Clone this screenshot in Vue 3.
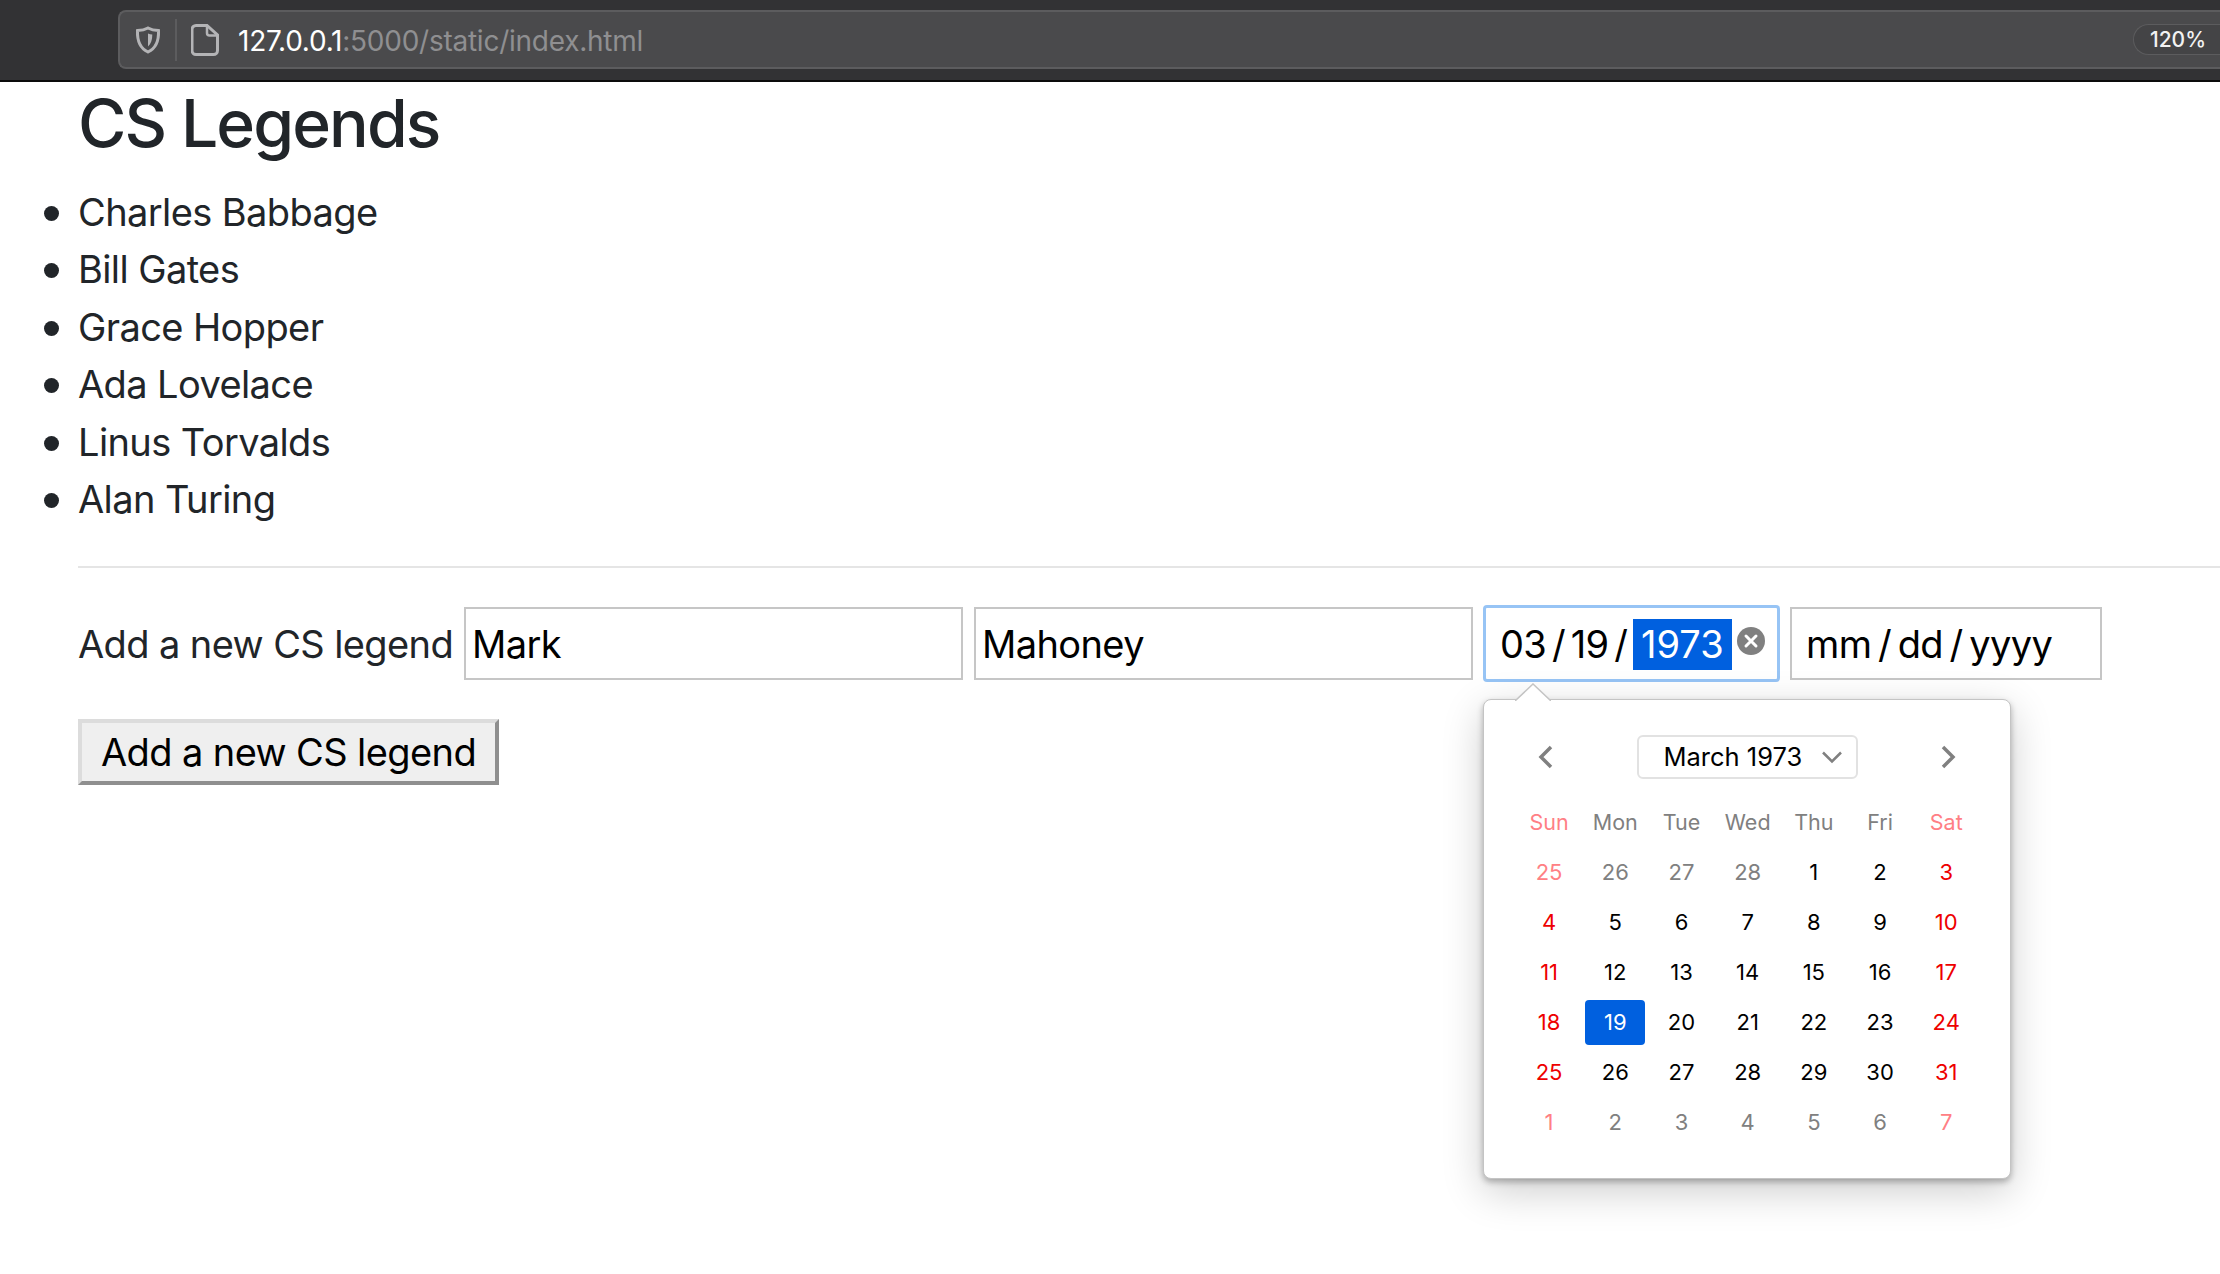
<template>
  <div class="page">
    <header class="toolbar">
      <div class="urlbar">
        <svg class="shield" width="26" height="28" viewBox="0 0 26 28" fill="none">
          <path d="M13 2c3 1.600 6.400 2.400 10.500 2.600.4 9.500-2.400 17.600-10.500 21.400C4.900 22.200 2.100 14.100 2.500 4.600 6.600 4.400 10 3.600 13 2z" stroke="#b4b4b6" stroke-width="3" />
          <path d="M13 7.500c1.400.6 2.800 1 4.300 1.100 0 5-1.300 9.500-4.300 12z" fill="#b4b4b6" />
        </svg>
        <span class="divider"></span>
        <svg class="file" width="28" height="32" viewBox="0 0 28 32" fill="none">
          <path d="M5 1.500h11L26.500 11v15.500a4 4 0 0 1-4 4H5a4 4 0 0 1-4-4v-21a4 4 0 0 1 4-4z" stroke="#b4b4b6" stroke-width="3" />
          <path d="M16 2v7a2.500 2.500 0 0 0 2.500 2.500H26" stroke="#b4b4b6" stroke-width="2.500" />
        </svg>
        <span class="url"><b>127.0.0.1</b>:5000/static/index.html</span>
        <span class="zoom">120%</span>
      </div>
    </header>

    <main class="content">
      <h1>CS Legends</h1>
      <ul class="legends">
        <li v-for="name in legends" :key="name">{{ name }}</li>
      </ul>
      <hr />
      <form class="add-row" @submit.prevent>
        <label>Add a new CS legend</label>
        <input class="field name" type="text" value="Mark" />
        <input class="field name" type="text" value="Mahoney" />
        <div class="date-wrap">
          <div class="field date focused">
            <span>03 / 19 / </span><span class="selected-part">1973</span>
            <svg class="clear" width="28" height="28" viewBox="0 0 28 28">
              <circle cx="14" cy="14" r="14" fill="#808080" />
              <path d="M9 9l10 10M19 9L9 19" stroke="#fff" stroke-width="3" stroke-linecap="round" />
            </svg>
          </div>
          <div class="popup">
            <svg class="caret" width="36" height="18" viewBox="0 0 36 18">
              <path d="M0 18L18 1l18 17" fill="#fff" stroke="#c4c4c4" stroke-width="1.500" />
            </svg>
            <div class="cal-head">
              <svg width="20" height="28" viewBox="0 0 20 28" fill="none">
                <path d="M15 4L5 14l10 10" stroke="#808080" stroke-width="3.500" />
              </svg>
              <div class="month-btn">
                <span>March 1973</span>
                <svg width="22" height="14" viewBox="0 0 22 14" fill="none">
                  <path d="M2 2.500l9 9 9-9" stroke="#808080" stroke-width="2.500" />
                </svg>
              </div>
              <svg width="20" height="28" viewBox="0 0 20 28" fill="none">
                <path d="M5 4l10 10L5 24" stroke="#808080" stroke-width="3.500" />
              </svg>
            </div>
            <div class="cal-grid">
              <span v-for="(d, i) in weekdays" :key="d" class="wd" :class="{ weekend: i === 0 || i === 6 }">{{ d }}</span>
              <span
                v-for="(c, i) in cells"
                :key="i"
                class="day"
                :class="{ other: c.other, weekend: i % 7 === 0 || i % 7 === 6, sel: c.sel }"
              >{{ c.n }}</span>
            </div>
          </div>
        </div>
        <div class="field date placeholder">mm / dd / yyyy</div>
      </form>
      <button class="add-btn" type="button">Add a new CS legend</button>
    </main>
  </div>
</template>

<script setup>
const legends = [
  'Charles Babbage',
  'Bill Gates',
  'Grace Hopper',
  'Ada Lovelace',
  'Linus Torvalds',
  'Alan Turing'
]

const weekdays = ['Sun', 'Mon', 'Tue', 'Wed', 'Thu', 'Fri', 'Sat']

// March 1973 starts on a Thursday
const cells = []
for (let n = 25; n <= 28; n++) cells.push({ n, other: true })
for (let n = 1; n <= 31; n++) cells.push({ n, sel: n === 19 })
for (let n = 1; n <= 7; n++) cells.push({ n, other: true })
</script>

<style>
html,
body {
  margin: 0;
  background: #fff;
  overflow: hidden;
}
</style>

<style scoped>
.page {
  width: 2220px;
  height: 1274px;
  font-family: Inter, "Liberation Sans", sans-serif;
  color: #212529;
}

.toolbar {
  box-sizing: content-box;
  height: 70px;
  padding: 10px 0 0 118px;
  background: #323234;
  border-bottom: 2px solid #0c0c0c;
}

.urlbar {
  height: 55px;
  display: flex;
  align-items: center;
  background: #4a4a4c;
  border: 2px solid #5c5c5e;
  border-right: 0;
  border-radius: 8px 0 0 8px;
  color: #8f8f91;
  font-size: 28px;
  letter-spacing: -0.25px;
}

.shield {
  margin-left: 15px;
}

.divider {
  width: 2px;
  height: 42px;
  margin-left: 14px;
  background: #5c5c5e;
}

.file {
  margin-left: 14px;
}

.url {
  margin-left: 19px;
  padding-top: 3px;
}

.url b {
  font-weight: 400;
  color: #fff;
}

.zoom {
  margin-left: auto;
  padding: 0 14px 0 16px;
  height: 29px;
  line-height: 29px;
  border: 1px solid #5c5c5e;
  border-right: 0;
  border-radius: 16px 0 0 16px;
  background: #444446;
  color: #f2f2f2;
  font-size: 21px;
  font-weight: 500;
  letter-spacing: 0;
}

.content {
  padding-left: 78px;
}

h1 {
  margin: 0 0 18.500px;
  font-size: 66px;
  font-weight: 500;
  line-height: 83px;
  letter-spacing: -1.9px;
}

.legends {
  margin: 0;
  padding: 0;
  list-style: none;
  font-size: 38px;
  letter-spacing: -0.6px;
  line-height: 57.600px;
}

.legends li {
  position: relative;
}

.legends li::before {
  content: "";
  position: absolute;
  left: -34px;
  top: 22px;
  width: 15px;
  height: 15px;
  border-radius: 50%;
  background: #212529;
}

hr {
  height: 2px;
  margin: 36.500px 0 39px;
  border: 0;
  background: #e5e5e5;
}

.add-row {
  display: flex;
  align-items: center;
  height: 73px;
  font-size: 38px;
  letter-spacing: -0.6px;
}

.add-row label {
  width: 386px;
  flex: none;
  padding-top: 2px;
}

.field {
  box-sizing: border-box;
  height: 73px;
  border: 2px solid #c6c6c6;
  background: #fff;
  color: #000;
  font-family: inherit;
  font-size: 38px;
  letter-spacing: -0.6px;
  outline: none;
}

.name {
  width: 499px;
  margin-right: 11px;
  padding: 2px 6px 0;
}

.date {
  width: 312px;
  padding: 2px 14px 0;
  display: flex;
  align-items: center;
  white-space: pre;
}

.placeholder {
  word-spacing: -3.500px;
}

.date-wrap {
  position: relative;
  width: 297px;
  margin: 0 10px 0 -1px;
}

.focused {
  position: relative;
  width: 297px;
  height: 77px;
  padding: 2px 0 0 14px;
  border: 3px solid #97c4f5;
  border-radius: 4px;
  margin: -2px 0;
  word-spacing: -4.400px;
}

.selected-part {
  padding: 4px 8px;
  line-height: 43px;
  letter-spacing: 0;
  background: #0060df;
  color: #fff;
}

.clear {
  margin: -6px 0 0 5px;
  flex: none;
}

.popup {
  position: absolute;
  top: 92px;
  left: 0;
  box-sizing: border-box;
  width: 528px;
  height: 480px;
  padding-top: 35px;
  background: #fff;
  border: 1px solid #c4c4c4;
  border-radius: 8px;
  box-shadow: 0 3px 6px rgba(0, 0, 0, 0.28), 0 12px 42px rgba(0, 0, 0, 0.2);
  color: #000;
  letter-spacing: 0;
  word-spacing: 0;
}

.caret {
  position: absolute;
  top: -17px;
  left: 31px;
}

.cal-head {
  display: flex;
  align-items: center;
  justify-content: space-between;
  padding: 0 52px;
  height: 44px;
}

.month-btn {
  box-sizing: border-box;
  width: 221px;
  height: 44px;
  display: flex;
  align-items: center;
  justify-content: space-between;
  padding: 0 13px 0 25px;
  border: 2px solid #e2e2e2;
  border-radius: 6px;
  font-size: 25.500px;
}

.cal-grid {
  display: grid;
  grid-template-columns: repeat(7, 66.200px);
  grid-auto-rows: 50px;
  margin: 18px 0 0 32px;
  justify-items: center;
  align-items: center;
  font-size: 22px;
}

.wd {
  color: #808080;
  font-size: 21.500px;
}

.wd.weekend {
  color: #ff7f85;
}

.day {
  width: 60px;
  height: 45px;
  margin-top: 2px;
  line-height: 45px;
  text-align: center;
  border-radius: 4px;
}

.day.weekend {
  color: #ee0000;
}

.day.other {
  color: #808080;
}

.day.other.weekend {
  color: #ff8084;
}

.day.sel {
  background: #0060df;
  color: #fff;
}

.add-btn {
  display: block;
  box-sizing: border-box;
  width: 421px;
  height: 66px;
  margin-top: 39px;
  padding: 0;
  border: 4px solid;
  border-color: #dcdcdc #8f8f8f #8f8f8f #dcdcdc;
  background: #efefef;
  color: #000;
  font-family: inherit;
  font-size: 38px;
  letter-spacing: -0.6px;
}
</style>
